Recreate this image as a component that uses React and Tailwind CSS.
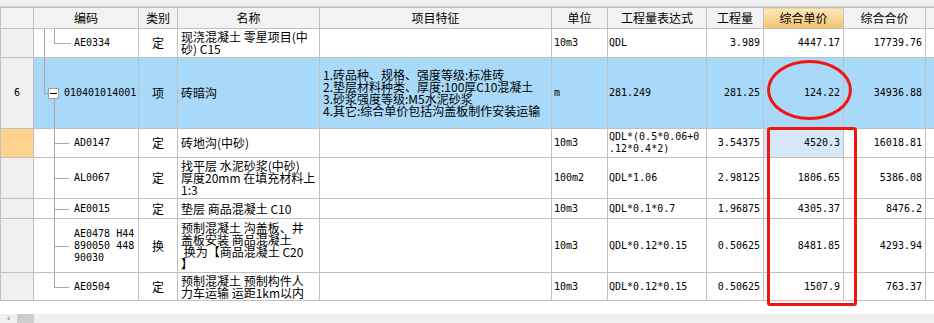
import React from "react";

const cjk = "font-['Noto_Sans_CJK_SC',sans-serif] text-[12px] leading-[12px]";
const mono = "font-['DejaVu_Sans_Mono','Noto_Sans_CJK_SC',monospace] text-[10px] leading-[12px]";
const line = "bg-[#a9a9a9]";

const widths = [33, 105, 39, 142, 232, 56, 99, 57, 80, 82, 9];
const headers = ["", "编码", "类别", "名称", "项目特征", "单位", "工程量表达式", "工程量", "综合单价", "综合合价", ""];

// tree kinds: "prev-last" = last child of item above, "parent" = expanded item, "child" / "last"
const rows = [
  {
    h: 29, no: "", tree: "prev-last", code: ["AE0334"], type: "定",
    name: ["现浇混凝土 零星项目(中", "砂) C15"], feat: [], unit: "10m3",
    expr: ["QDL"], qty: "3.989", price: "4447.17", total: "17739.76",
  },
  {
    h: 71, no: "6", tree: "parent", code: ["010401014001"], type: "项", sel: true,
    name: ["砖暗沟"],
    feat: [
      "1.砖品种、规格、强度等级:标准砖",
      "2.垫层材料种类、厚度:100厚C10混凝土",
      "3.砂浆强度等级:M5水泥砂浆",
      "4.其它:综合单价包括沟盖板制作安装运输",
    ],
    unit: "m", expr: ["281.249"], qty: "281.25", price: "124.22", total: "34936.88",
  },
  {
    h: 29, no: "", tree: "child", code: ["AD0147"], type: "定", cur: true,
    name: ["砖地沟(中砂)"], feat: [], unit: "10m3",
    expr: ["QDL*(0.5*0.06+0", ".12*0.4*2)"], qty: "3.54375", price: "4520.3", total: "16018.81",
  },
  {
    h: 41, no: "", tree: "child", code: ["AL0067"], type: "定",
    name: ["找平层 水泥砂浆(中砂)", "厚度20mm 在填充材料上", "1:3"], feat: [], unit: "100m2",
    expr: ["QDL*1.06"], qty: "2.98125", price: "1806.65", total: "5386.08",
  },
  {
    h: 20, no: "", tree: "child", code: ["AE0015"], type: "定",
    name: ["垫层 商品混凝土 C10"], feat: [], unit: "10m3",
    expr: ["QDL*0.1*0.7"], qty: "1.96875", price: "4305.37", total: "8476.2",
  },
  {
    h: 54, no: "", tree: "child", code: ["AE0478 H44", "890050 448", "90030"], type: "换",
    name: ["预制混凝土 沟盖板、井", "盖板安装 商品混凝土", " 换为【商品混凝土 C20", "】"], feat: [], unit: "10m3",
    expr: ["QDL*0.12*0.15"], qty: "0.50625", price: "8481.85", total: "4293.94",
  },
  {
    h: 28, no: "", tree: "last", code: ["AE0504"], type: "定",
    name: ["预制混凝土 预制构件人", "力车运输 运距1km以内"], feat: [], unit: "10m3",
    expr: ["QDL*0.12*0.15"], qty: "0.50625", price: "1507.9", total: "763.37",
  },
];

function Lines({ items }) {
  return items.map((t, i) => (
    <div key={i} className="whitespace-pre">
      {t}
    </div>
  ));
}

function Tree({ kind }) {
  if (kind === "prev-last") {
    return (
      <>
        <span className={`absolute left-[10px] top-0 bottom-0 w-px ${line}`} />
        <span className={`absolute left-[20px] top-0 h-1/2 w-px ${line}`} />
        <span className={`absolute left-[20px] top-1/2 w-[17px] h-px ${line}`} />
      </>
    );
  }
  if (kind === "parent") {
    return (
      <>
        <span className={`absolute left-[10px] top-0 h-1/2 w-px ${line}`} />
        <span className={`absolute left-[10px] top-1/2 w-[4px] h-px ${line}`} />
        <span className={`absolute left-[20px] top-1/2 bottom-0 w-px ${line}`} />
        <span className="absolute left-[14px] top-1/2 -mt-[5px] w-[11px] h-[11px] bg-white border border-[#a0a0a0] flex items-center justify-center">
          <span className="w-[7px] h-px bg-black" />
        </span>
      </>
    );
  }
  return (
    <>
      <span className={`absolute left-[20px] top-0 w-px ${line} ${kind === "last" ? "h-1/2" : "bottom-0"}`} />
      <span className={`absolute left-[20px] top-1/2 w-[15px] h-px ${line}`} />
    </>
  );
}

export default function App() {
  const cell = "border border-[#c0c0c0] align-middle p-0";
  return (
    <div className="relative w-[934px] h-[323px] overflow-hidden bg-white text-black flex flex-col">
      <div className="h-[7px] shrink-0 bg-[#f0f0f0] border-b border-[#d4d4d4]" />
      <table className="table-fixed border-collapse w-[934px] shrink-0">
        <colgroup>
          {widths.map((w, i) => (
            <col key={i} style={{ width: w }} />
          ))}
        </colgroup>
        <thead>
          <tr className="h-[21px]">
            {headers.map((t, i) => (
              <th
                key={i}
                className={`${cell} font-normal ${cjk} text-center ${
                  i === 8
                    ? "bg-gradient-to-b from-[#fde7bd] to-[#f4c36c]"
                    : "bg-[#f2f2f2]"
                } ${i === 10 ? "border-r-0" : ""}`}
              >
                {t}
              </th>
            ))}
          </tr>
        </thead>
        <tbody>
          {rows.map((r, i) => {
            const bg = r.sel ? "bg-[#a8d9f8]" : "bg-white";
            return (
              <tr key={i} style={{ height: r.h }}>
                <td
                  className={`${cell} ${mono} text-center ${
                    r.cur ? "bg-[#fdd28d]" : "bg-[#f0f0f0]"
                  }`}
                >
                  {r.no}
                </td>
                <td className={`${cell} ${bg} relative ${mono}`}>
                  <Tree kind={r.tree} />
                  <div className={r.tree === "parent" ? "pl-[30px]" : "pl-[40px]"}>
                    <Lines items={r.code} />
                  </div>
                </td>
                <td className={`${cell} ${bg} ${cjk} text-center`}>{r.type}</td>
                <td className={`${cell} ${bg} ${cjk} px-[3px]`}>
                  <Lines items={r.name} />
                </td>
                <td className={`${cell} ${bg} ${cjk} px-[3px]`}>
                  <Lines items={r.feat} />
                </td>
                <td className={`${cell} ${bg} ${mono} px-[2px]`}>{r.unit}</td>
                <td className={`${cell} ${bg} ${mono} px-[1px]`}>
                  <Lines items={r.expr} />
                </td>
                <td className={`${cell} ${bg} ${mono} text-right pr-[3px]`}>{r.qty}</td>
                <td
                  className={`${cell} ${r.cur ? "bg-[#d5e8f8]" : bg} ${mono} text-right pr-[3px]`}
                >
                  {r.price}
                </td>
                <td className={`${cell} ${bg} ${mono} text-right pr-[3px]`}>{r.total}</td>
                <td className={`${cell} ${bg} border-r-0`} />
              </tr>
            );
          })}
        </tbody>
      </table>

      <div className="flex-1 min-h-[13px] bg-white" />

      {/* horizontal scrollbar, cut by the window's bottom edge */}
      <div className="h-[10px] shrink-0 bg-[#f0f0f0] flex items-start">
        <span className="w-[17px] text-center font-['DejaVu_Sans',sans-serif] text-[9px] leading-[9px] text-[#606060]">
          ‹
        </span>
        <span className="w-[17px] h-[10px] bg-[#cdcdcd]" />
      </div>

      {/* red annotations drawn over the grid */}
      <div className="absolute left-[767px] top-[60px] w-[85px] h-[60px] rounded-[50%] border-[3px] border-[#f2160f]" />
      <div className="absolute left-[767px] top-[127px] w-[90px] h-[179px] rounded-[3px] border-[3px] border-[#f2160f]" />
    </div>
  );
}
